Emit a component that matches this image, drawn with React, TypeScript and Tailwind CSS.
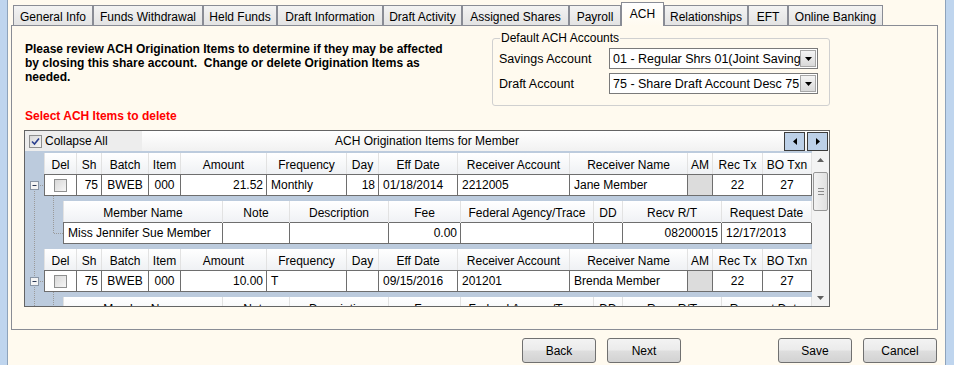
import React from "react";

type Col = { h: string; w: string; a: "l" | "r" | "c"; gray?: boolean; chk?: boolean };

const tabs: { t: string; w: string; active?: boolean }[] = [
  { t: "General Info", w: "w-[80px]" },
  { t: "Funds Withdrawal", w: "w-[110px]" },
  { t: "Held Funds", w: "w-[74px]" },
  { t: "Draft Information", w: "w-[106px]" },
  { t: "Draft Activity", w: "w-[79px]" },
  { t: "Assigned Shares", w: "w-[107px]" },
  { t: "Payroll", w: "w-[52px]" },
  { t: "ACH", w: "w-[43px]", active: true },
  { t: "Relationships", w: "w-[84px]" },
  { t: "EFT", w: "w-[40px]" },
  { t: "Online Banking", w: "w-[95px]" },
];

const mainCols: Col[] = [
  { h: "Del", w: "w-[32px]", a: "c", chk: true },
  { h: "Sh", w: "w-[25px]", a: "r" },
  { h: "Batch", w: "w-[47px]", a: "c" },
  { h: "Item", w: "w-[32px]", a: "c" },
  { h: "Amount", w: "w-[86px]", a: "r" },
  { h: "Frequency", w: "w-[80px]", a: "l" },
  { h: "Day", w: "w-[32px]", a: "r" },
  { h: "Eff Date", w: "w-[79px]", a: "l" },
  { h: "Receiver Account", w: "w-[112px]", a: "l" },
  { h: "Receiver Name", w: "w-[118px]", a: "l" },
  { h: "AM", w: "w-[25px]", a: "c", gray: true },
  { h: "Rec Tx", w: "w-[50px]", a: "c" },
  { h: "BO Txn", w: "w-[49px]", a: "c" },
];

const childCols: Col[] = [
  { h: "Member Name", w: "w-[159px]", a: "l" },
  { h: "Note", w: "w-[67px]", a: "l" },
  { h: "Description", w: "w-[99px]", a: "l" },
  { h: "Fee", w: "w-[72px]", a: "r" },
  { h: "Federal Agency/Trace", w: "w-[133px]", a: "l" },
  { h: "DD", w: "w-[29px]", a: "l" },
  { h: "Recv R/T", w: "w-[99px]", a: "r" },
  { h: "Request Date", w: "w-[90px]", a: "l" },
];

const groups = [
  {
    main: ["", "75", "BWEB", "000", "21.52", "Monthly", "18", "01/18/2014", "2212005", "Jane Member", "", "22", "27"],
    child: ["Miss Jennifer Sue Member", "", "", "0.00", "", "", "08200015", "12/17/2013"],
  },
  {
    main: ["", "75", "BWEB", "000", "10.00", "T", "", "09/15/2016", "201201", "Brenda Member", "", "22", "27"],
    child: ["", "", "", "", "", "", "", ""],
  },
];

const alignCls = {
  l: "justify-start pl-[4px]",
  r: "justify-end pr-[3px]",
  c: "justify-center",
};

function Check({ checked }: { checked?: boolean }) {
  return (
    <div className="flex h-[13px] w-[13px] shrink-0 items-center justify-center border border-[#8e8f8f] bg-[linear-gradient(135deg,#d8d8d8,#f6f6f6)]">
      {checked && (
        <svg width="9" height="9" viewBox="0 0 9 9">
          <path d="M1 4.5 L3.5 7 L8 1.5" fill="none" stroke="#2a3f8f" strokeWidth="1.6" />
        </svg>
      )}
    </div>
  );
}

function HeaderRow({ cols, h }: { cols: Col[]; h: string }) {
  return (
    <div className={`flex ${h} border-l border-[#e2e2e2] bg-[linear-gradient(#ffffff,#eff1f4)]`}>
      {cols.map((c) => (
        <div
          key={c.h}
          className={`${c.w} flex shrink-0 items-center justify-center whitespace-nowrap border-r border-[#e2e2e2] pt-[2px]`}
        >
          {c.h}
        </div>
      ))}
    </div>
  );
}

function DataRow({ cols, vals, h }: { cols: Col[]; vals: string[]; h: string }) {
  return (
    <div className={`flex ${h} border-y border-l border-[#6e6e6e] bg-white`}>
      {cols.map((c, i) => (
        <div
          key={c.h}
          className={`${c.w} flex shrink-0 items-center overflow-hidden whitespace-nowrap border-r border-[#6e6e6e] ${alignCls[c.a]} ${c.gray ? "bg-[#dcdcdc]" : ""}`}
        >
          {c.chk ? <Check /> : vals[i]}
        </div>
      ))}
    </div>
  );
}

function Group({ g }: { g: (typeof groups)[number] }) {
  return (
    <div className="relative">
      <svg className="absolute left-0 top-0" width="40" height="160">
        <line x1="9.5" y1="38" x2="9.5" y2="160" stroke="#9a9a9a" strokeDasharray="1 1" />
        <line x1="15" y1="32.5" x2="19" y2="32.5" stroke="#9a9a9a" strokeDasharray="1 1" />
        <line x1="28.5" y1="43" x2="28.5" y2="80" stroke="#9a9a9a" strokeDasharray="1 1" />
        <line x1="29" y1="80.5" x2="38" y2="80.5" stroke="#9a9a9a" strokeDasharray="1 1" />
        <rect x="5.5" y="28.5" width="8" height="8" fill="#f4f4f4" stroke="#8a96a6" />
        <line x1="7.5" y1="32.5" x2="11.5" y2="32.5" stroke="#2d3a56" />
      </svg>
      <div className="relative ml-[19px]">
        <HeaderRow cols={mainCols} h="h-[21px]" />
        <DataRow cols={mainCols} vals={g.main} h="h-[22px]" />
      </div>
      <div className="relative ml-[38px] mt-[5px]">
        <HeaderRow cols={childCols} h="h-[22px]" />
        <div className="-mt-px">
          <DataRow cols={childCols} vals={g.child} h="h-[22px]" />
        </div>
      </div>
      <div className="h-[5px]" />
    </div>
  );
}

function Combo({ text }: { text: string }) {
  return (
    <div className="flex h-[21px] w-[209px] items-center border border-[#7a7a7a] bg-white pl-[3px]">
      <div className="flex-1 overflow-hidden whitespace-nowrap text-[12.5px]">{text}</div>
      <div className="mr-px flex h-[17px] w-[16px] shrink-0 items-center justify-center border border-[#a7a7a7] bg-[linear-gradient(#f4f4f4,#d9d9d9)]">
        <svg width="7" height="4" viewBox="0 0 7 4">
          <path d="M0 0 H7 L3.5 4 Z" fill="#000" />
        </svg>
      </div>
    </div>
  );
}

function Btn({ label, extra = "" }: { label: string; extra?: string }) {
  return (
    <div
      className={`flex h-[25px] w-[74px] items-center justify-center rounded-[3px] border border-[#707070] bg-[linear-gradient(#f3f3f3_0%,#ebebeb_48%,#dedede_52%,#d2d2d2_100%)] ${extra}`}
    >
      {label}
    </div>
  );
}

export default function App() {
  return (
    <div className="flex h-[365px] w-[954px] overflow-hidden bg-[#fffaef] font-[family-name:'Liberation_Sans',Arial,sans-serif] text-[12px] leading-[14px] text-black">
      <div className="w-[7px] shrink-0 bg-[#bfd5ee]" />
      <div className="w-px shrink-0 bg-[#8ea3bb]" />
      <div className="flex w-[937px] shrink-0 flex-col">
        {/* tabs */}
        <div className="relative z-10 -mb-px mt-[2px] flex h-[24px] items-end pl-[5px]">
          {tabs.map((t) =>
            t.active ? (
              <div
                key={t.t}
                className={`${t.w} flex h-[24px] shrink-0 items-start justify-center border border-b-0 border-[#898c95] bg-[linear-gradient(#ffffff,#fffaef)] pt-[4px]`}
              >
                {t.t}
              </div>
            ) : (
              <div
                key={t.t}
                className={`${t.w} mb-px flex h-[20px] shrink-0 items-center justify-center whitespace-nowrap border border-b-0 border-[#898c95] bg-[linear-gradient(#f3f3f3,#e3e3e3)] pt-[2px]`}
              >
                {t.t}
              </div>
            )
          )}
        </div>

        {/* panel */}
        <div className="ml-[3px] flex h-[305px] w-[927px] flex-col border border-[#898c95] pl-[12px]">
          <div className="flex h-[104px]">
            <div className="w-[468px] shrink-0 pl-px pt-[16px]">
              <div className="font-bold">
                Please review ACH Origination Items to determine if they may be affected
                <br />
                by closing this share account.&nbsp; Change or delete Origination Items as
                <br />
                needed.
              </div>
              <div className="mt-[25px] font-bold text-[#ff0000]">Select ACH Items to delete</div>
            </div>
            <fieldset className="mt-[5px] h-[75px] w-[338px] shrink-0 rounded-[3px] border border-[#d0d0d0] p-0">
              <legend className="ml-[7px] px-px">Default ACH Accounts</legend>
              <div className="flex flex-col gap-[4px] pl-[6px] pt-[3px]">
                <div className="flex items-center">
                  <div className="w-[110px] text-[12.5px]">Savings Account</div>
                  <Combo text="01 - Regular Shrs 01(Joint Saving" />
                </div>
                <div className="flex items-center">
                  <div className="w-[110px] text-[12.5px]">Draft Account</div>
                  <Combo text="75 - Share Draft Account Desc 75" />
                </div>
              </div>
            </fieldset>
          </div>

          {/* grid */}
          <div className="flex h-[177px] w-[806px] flex-col border border-[#646464]">
            <div className="grid h-[20px] shrink-0 grid-cols-[1fr_auto_1fr] bg-[linear-gradient(#ffffff,#f1f1f1)]">
              <div className="flex">
                <div className="flex h-[20px] w-[117px] items-center gap-[3px] bg-[#ededed] pl-[4px]">
                  <Check checked />
                  <span>Collapse All</span>
                </div>
              </div>
              <div className="flex items-center justify-center">ACH Origination Items for Member</div>
              <div className="flex items-start justify-end gap-[2px] pr-px pt-px">
                <div className="flex h-[19px] w-[21px] items-center justify-center border border-[#3c3c3c] bg-[#bcd0e8]">
                  <svg width="4" height="7" viewBox="0 0 4 7">
                    <path d="M4 0 V7 L0 3.5 Z" fill="#000" />
                  </svg>
                </div>
                <div className="flex h-[19px] w-[21px] items-center justify-center border border-[#3c3c3c] bg-[#bcd0e8]">
                  <svg width="4" height="7" viewBox="0 0 4 7">
                    <path d="M0 0 V7 L4 3.5 Z" fill="#000" />
                  </svg>
                </div>
              </div>
            </div>
            <div className="flex flex-1 overflow-hidden bg-[#bccbdd]">
              <div className="flex-1 overflow-hidden pt-[2px]">
                {groups.map((g, i) => (
                  <Group key={i} g={g} />
                ))}
              </div>
              <div className="flex w-[17px] shrink-0 flex-col bg-[#f3f3f3]">
                <div className="flex h-[17px] items-center justify-center">
                  <svg width="7" height="4" viewBox="0 0 7 4">
                    <path d="M0 4 H7 L3.5 0 Z" fill="#606060" />
                  </svg>
                </div>
                <div className="flex-1 px-px pt-[4px]">
                  <div className="flex h-[39px] flex-col items-center justify-center gap-[2px] rounded-[2px] border border-[#979797] bg-[linear-gradient(90deg,#f2f2f2,#e0e0e0)]">
                    <div className="h-px w-[6px] bg-[#8a8a8a]" />
                    <div className="h-px w-[6px] bg-[#8a8a8a]" />
                    <div className="h-px w-[6px] bg-[#8a8a8a]" />
                  </div>
                </div>
                <div className="flex h-[17px] items-center justify-center">
                  <svg width="7" height="4" viewBox="0 0 7 4">
                    <path d="M0 0 H7 L3.5 4 Z" fill="#606060" />
                  </svg>
                </div>
              </div>
            </div>
          </div>
        </div>

        {/* buttons */}
        <div className="mt-[8px] flex justify-end gap-[11px] pr-[8px]">
          <Btn label="Back" />
          <Btn label="Next" />
          <Btn label="Save" extra="ml-[86px]" />
          <Btn label="Cancel" />
        </div>
      </div>
      <div className="w-px shrink-0 bg-[#8ea3bb]" />
      <div className="flex-1 bg-[#bfd5ee]" />
    </div>
  );
}
